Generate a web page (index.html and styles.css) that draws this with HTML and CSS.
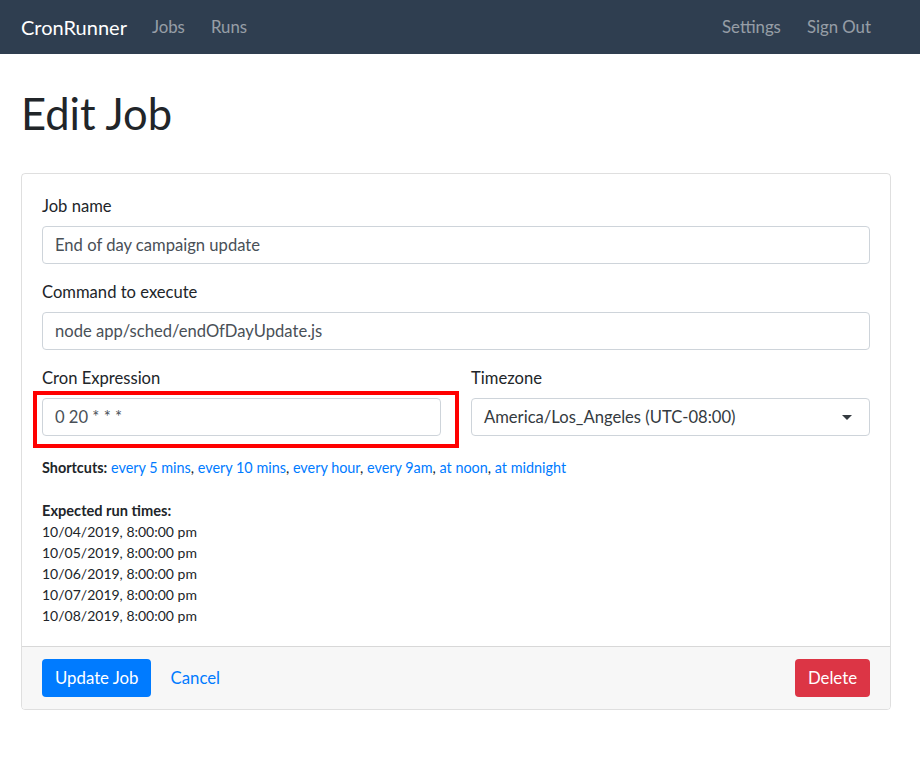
FILE: index.html
```html
<!DOCTYPE html>
<html lang="en">
<head>
<meta charset="utf-8">
<title>CronRunner - Edit Job</title>
<link rel="stylesheet" href="styles.css">
</head>
<body>
<nav class="navbar">
  <a class="brand" href="#">CronRunner</a>
  <ul class="nav-list">
    <li><a class="nav-link" href="#">Jobs</a></li>
    <li><a class="nav-link" href="#">Runs</a></li>
  </ul>
  <ul class="nav-list nav-right">
    <li><a class="nav-link" href="#">Settings</a></li>
    <li><a class="nav-link" href="#">Sign Out</a></li>
  </ul>
</nav>
<main class="page">
  <h1 class="title">Edit Job</h1>
  <form class="card">
    <div class="card-body">
      <div class="field">
        <label class="label">Job name</label>
        <input class="form-control" type="text" value="End of day campaign update">
      </div>
      <div class="field">
        <label class="label">Command to execute</label>
        <input class="form-control" type="text" value="node app/sched/endOfDayUpdate.js">
      </div>
      <div class="form-row">
        <div class="field">
          <label class="label">Cron Expression</label>
          <div class="highlight">
            <input class="form-control" type="text" value="0 20 * * *">
          </div>
        </div>
        <div class="field">
          <label class="label">Timezone</label>
          <div class="form-control select">
            <span class="select-text">America/Los_Angeles (UTC-08:00)</span>
            <svg class="caret" width="10" height="5" viewBox="0 0 10 5"><path d="M0 0 L10 0 L5 5 Z" fill="#343a40"/></svg>
          </div>
        </div>
      </div>
      <p class="shortcuts"><strong>Shortcuts:</strong> <a href="#">every 5 mins</a>, <a href="#">every 10 mins</a>, <a href="#">every hour</a>, <a href="#">every 9am</a>, <a href="#">at noon</a>, <a href="#">at midnight</a></p>
      <div class="runs">
        <strong>Expected run times:</strong>
        <div>10/04/2019, 8:00:00 pm</div>
        <div>10/05/2019, 8:00:00 pm</div>
        <div>10/06/2019, 8:00:00 pm</div>
        <div>10/07/2019, 8:00:00 pm</div>
        <div>10/08/2019, 8:00:00 pm</div>
      </div>
    </div>
    <div class="card-footer">
      <button class="btn btn-primary" type="button">Update Job</button>
      <button class="btn btn-link" type="button">Cancel</button>
      <button class="btn btn-danger" type="button">Delete</button>
    </div>
  </form>
</main>
</body>
</html>
```

FILE: styles.css
```css
html, body {
  margin: 0;
  padding: 0;
}
body {
  font-family: Lato, "Noto Sans", sans-serif;
  font-size: 16.6px;
  line-height: 24px;
  color: #212529;
  background: #fff;
}
a {
  color: #007bff;
  text-decoration: none;
}

.navbar {
  display: flex;
  align-items: center;
  height: 54px;
  background: #2f3e50;
  padding: 0 36px 0 21px;
}
.brand {
  color: #fff;
  font-size: 20px;
  margin-right: 12px;
}
.nav-list {
  display: flex;
  list-style: none;
  margin: 0;
  padding: 0;
}
.nav-right {
  margin-left: auto;
}
.nav-link {
  display: block;
  color: rgba(255, 255, 255, 0.5);
  font-size: 16.8px;
  padding: 0 13px;
}

.page {
  padding: 0 29px 0 21px;
}
.title {
  font-size: 43.5px;
  font-weight: 400;
  line-height: 52px;
  margin: 33px 0 34px;
}

.card {
  border: 1px solid rgba(0, 0, 0, 0.125);
  border-radius: 4px;
  margin: 0;
}
.card-body {
  padding: 20px 20px 20px;
}
.field {
  margin-bottom: 16px;
}
.label {
  display: block;
  margin-bottom: 8px;
}
.form-control {
  display: block;
  box-sizing: border-box;
  width: 100%;
  height: 38px;
  padding: 6px 12px;
  font-family: inherit;
  font-size: 16.6px;
  line-height: 24px;
  color: #495057;
  background: #fff;
  border: 1px solid #ced4da;
  border-radius: 4px;
  margin: 0;
}
.form-row {
  display: grid;
  grid-template-columns: 1fr 1fr;
  column-gap: 30px;
}
.highlight {
  position: relative;
}
.highlight::after {
  content: "";
  position: absolute;
  left: -9px;
  top: -7px;
  right: -18px;
  bottom: -12px;
  border: 4px solid #ff0000;
  pointer-events: none;
}
.select {
  display: flex;
  align-items: center;
  justify-content: space-between;
  padding-right: 17px;
}
.select-text {
  color: #343a40;
}
.caret {
  display: block;
}

.shortcuts {
  font-size: 14.4px;
  line-height: 19.5px;
  margin: 6px 0 0;
}
.shortcuts strong {
  font-weight: 700;
}
.runs {
  font-size: 14px;
  line-height: 21px;
  margin-top: 22px;
}
.runs strong {
  display: block;
  font-weight: 700;
  font-size: 14.6px;
}

.card-footer {
  display: flex;
  align-items: center;
  padding: 12px 20px;
  background: #f7f7f7;
  border-top: 1px solid rgba(0, 0, 0, 0.125);
  border-radius: 0 0 3px 3px;
}
.btn {
  font-family: inherit;
  font-size: 16.8px;
  line-height: 24px;
  padding: 6px 12px;
  border: 1px solid transparent;
  border-radius: 4px;
  cursor: pointer;
}
.btn-primary {
  background: #007bff;
  color: #fff;
}
.btn-link {
  background: transparent;
  color: #007bff;
  margin-left: 6px;
}
.btn-danger {
  background: #dc3545;
  color: #fff;
  margin-left: auto;
}
```
